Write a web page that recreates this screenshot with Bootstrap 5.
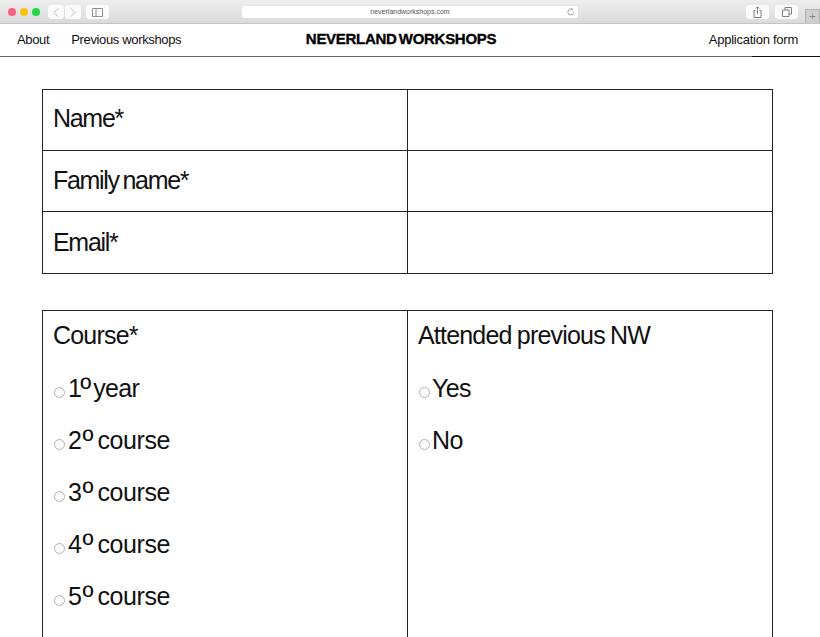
<!DOCTYPE html>
<html lang="en"><head><meta charset="utf-8"><title>Neverland Workshops</title>
<link rel="stylesheet" href="https://cdn.jsdelivr.net/npm/bootstrap@5.3.0/dist/css/bootstrap.min.css">
<style>
html,body{height:637px;overflow:hidden;background:#fff;}
body{font-family:"Liberation Sans",Arial,sans-serif;color:#111;}
.chrome{height:24px;background:linear-gradient(#efeeee,#dcdbdb);border-bottom:1px solid #c6c5c5;position:relative;}
.winctl{position:absolute;left:8px;top:5px;height:14px;}
.dot{width:8px;height:8px;border-radius:50%;}
.tbtn{height:14px;background:#fbfbfb;border-radius:3px;}
.urlbar{position:absolute;left:242px;top:6px;width:336px;height:12px;background:#fff;border-radius:2px;font-size:7px;line-height:12px;text-align:center;color:#555;}
.urlbar svg{position:absolute;right:3px;top:2px;}
.tplus{position:absolute;left:805px;top:9px;width:15px;height:14px;background:#d0cfcf;border:1px solid #b5b4b4;border-bottom:0;color:#888;font-size:11px;line-height:13px;text-align:center;}
.tool-r{position:absolute;top:5px;width:23px;}
.sitenav{height:33px;border-bottom:1px solid #666;position:relative;font-size:13px;letter-spacing:-.35px;padding:0 22px 0 17px;}
.sitenav a{color:#111;text-decoration:none;}
.leftlinks{gap:22px;margin-top:-1px;}
.applink{margin-top:-1px;letter-spacing:-.25px;}
.brand{position:absolute;left:0;right:0;top:0;line-height:29px;text-align:center;font-weight:700;font-size:15px;letter-spacing:-.3px;word-spacing:-1.5px;color:#000;padding-right:18px;-webkit-text-stroke:.35px #000;}
.activeline{position:absolute;left:752px;width:68px;bottom:-1px;height:1px;background:#111;}
.formwrap{padding:32px 48px 0 42px;}
.ftable{border:1px solid #222;display:grid;grid-template-columns:365px 364px;width:731px;}
.fcell{height:61px;padding:0 10px 2px;font-size:25px;letter-spacing:-1.3px;word-spacing:-2px;display:flex;align-items:center;color:#111;}
.fcell.mid{padding-bottom:1px;}
.fcell.end{padding-bottom:0;height:60.7px;}
.fcell.rb{border-right:1px solid #222;}
.fcell.bb{border-bottom:1px solid #222;}
.second{margin-top:36px;border-bottom:0;}
.ccol{height:340px;padding:8px 10px 0;font-size:25px;letter-spacing:-.8px;line-height:32px;word-spacing:-1px;}
.ccol.rb{border-right:1px solid #222;}
.optrow{margin-top:20px;height:32px;display:flex;align-items:center;white-space:pre;letter-spacing:-.6px;}
.optrow:nth-child(2){margin-top:21px;}
.ordtext{letter-spacing:-.4px;}
.ordn{font-size:30px;line-height:0;position:relative;top:2px;margin:0 4px 0 1px;letter-spacing:0;}
.optrow:nth-child(2) .ordn{margin:0 2px 0 -1px;}
.optrow:nth-child(2) .ordtext{letter-spacing:-.7px;}
.optrow .tight{margin-left:-1px;}
.rad{appearance:none;width:11px;height:11px;border:1px solid #b4b4b4;border-radius:50%;background:#fafafa;margin:9px 3px 0 1px;flex:none;}
</style></head><body>
<div class="chrome">
 <div class="winctl d-flex align-items-center" style="gap:4px">
  <span class="dot" style="background:#fb5f83"></span><span class="dot" style="background:#fdc30f"></span><span class="dot" style="background:#1fd84b"></span>
  <span class="tbtn ms-1 d-flex align-items-center justify-content-center" style="width:16px"><svg width="6" height="9" viewBox="0 0 6 9"><path d="M5 .5 1 4.500l4 4" fill="none" stroke="#b5b5b5"/></svg></span>
  <span class="tbtn d-flex align-items-center justify-content-center" style="width:16px;margin-left:-3px"><svg width="6" height="9" viewBox="0 0 6 9"><path d="m1 .5 4 4-4 4" fill="none" stroke="#b5b5b5"/></svg></span>
  <span class="tbtn d-flex align-items-center justify-content-center" style="width:23px;margin-left:1px"><svg width="11" height="9" viewBox="0 0 11 9"><path d="M.5.5h10v8H.5zM4 .5v8" fill="none" stroke="#777" stroke-width=".8"/></svg></span>
 </div>
 <div class="urlbar">neverlandworkshops.com<svg width="8" height="8" viewBox="0 0 8 8"><path d="M6.800 4.200A2.900 2.900 0 1 1 5 1.300M4.500.2 5.600 1.300 4.500 2.400" fill="none" stroke="#777" stroke-width=".7"/></svg></div>
 <div class="tbtn tool-r d-flex align-items-center justify-content-center" style="left:746px"><svg width="9" height="12" viewBox="0 0 9 12"><path d="M2.500 4.500H1v7h7v-7H6.500M4.500 8V1M2.800 2.500 4.500.8l1.700 1.700" fill="none" stroke="#666" stroke-width=".8"/></svg></div>
 <div class="tbtn tool-r d-flex align-items-center justify-content-center" style="left:775px"><svg width="10" height="10" viewBox="0 0 10 10"><path d="M3 3V.5h6.500V7H7M.5 3H7v6.500H.5z" fill="none" stroke="#666" stroke-width=".8"/></svg></div>
 <div class="tplus">+</div>
</div>
<nav class="sitenav d-flex align-items-center justify-content-between">
 <div class="leftlinks d-flex"><a href="#">About</a><a href="#">Previous workshops</a></div>
 <div class="brand">NEVERLAND WORKSHOPS</div>
 <a href="#" class="applink">Application form</a>
 <span class="activeline"></span>
</nav>
<main class="formwrap">
 <div class="ftable">
  <div class="fcell rb bb">Name*</div><div class="fcell bb"></div>
  <div class="fcell mid rb bb">Family name*</div><div class="fcell mid bb"></div>
  <div class="fcell end rb">Email*</div><div class="fcell end"></div>
 </div>
 <div class="ftable second">
  <div class="ccol rb"><div>Course*</div>
   <div class="optrow"><input class="rad" type="radio" name="c"><span class="ordtext">1<span class="ordn">º</span>year</span></div>
   <div class="optrow"><input class="rad" type="radio" name="c"><span class="ordtext">2<span class="ordn">º</span>course</span></div>
   <div class="optrow"><input class="rad" type="radio" name="c"><span class="ordtext">3<span class="ordn">º</span>course</span></div>
   <div class="optrow"><input class="rad" type="radio" name="c"><span class="ordtext">4<span class="ordn">º</span>course</span></div>
   <div class="optrow"><input class="rad" type="radio" name="c"><span class="ordtext">5<span class="ordn">º</span>course</span></div>
  </div>
  <div class="ccol"><div>Attended previous NW</div>
   <div class="optrow"><input class="rad" type="radio" name="a"><span class="tight">Yes</span></div>
   <div class="optrow"><input class="rad" type="radio" name="a"><span class="tight">No</span></div>
  </div>
 </div>
</main>
<script src="https://cdn.jsdelivr.net/npm/bootstrap@5.3.0/dist/js/bootstrap.bundle.min.js"></script>
</body></html>
